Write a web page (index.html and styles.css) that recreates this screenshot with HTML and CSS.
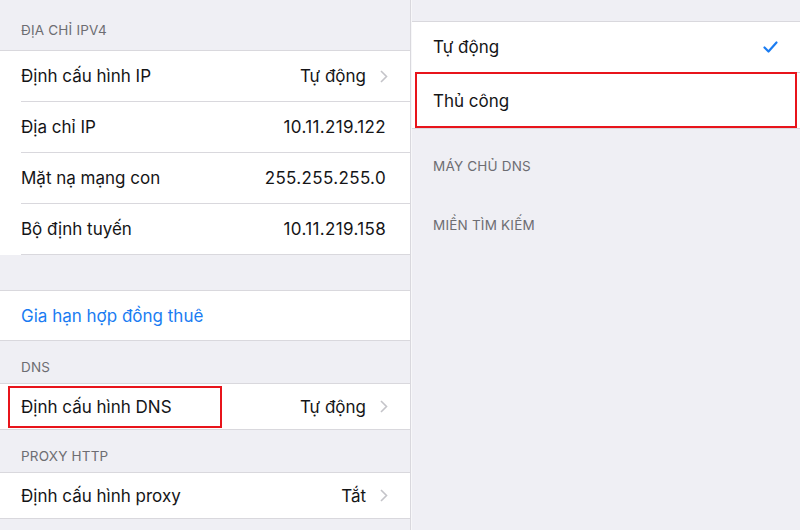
FILE: index.html
```html
<!DOCTYPE html>
<html lang="vi">
<head>
  <meta charset="UTF-8">
  <title>Wi-Fi – Cấu hình</title>
  <link rel="stylesheet" href="styles.css">
</head>
<body>
  <div class="split">
    <!-- network detail pane -->
    <div class="pane pane-left">
      <div class="section-title first">ĐỊA CHỈ IPV4</div>
      <div class="group">
        <div class="row">
          <span class="label">Định cấu hình IP</span>
          <span class="value">Tự động</span>
          <svg class="chevron" viewBox="0 0 8 13"><path d="M1 1l5.5 5.5L1 12"/></svg>
        </div>
        <div class="row">
          <span class="label">Địa chỉ IP</span>
          <span class="value num">10.11.219.122</span>
        </div>
        <div class="row">
          <span class="label">Mặt nạ mạng con</span>
          <span class="value num">255.255.255.0</span>
        </div>
        <div class="row last-inset">
          <span class="label">Bộ định tuyến</span>
          <span class="value num">10.11.219.158</span>
        </div>
      </div>

      <div class="group spaced">
        <div class="row slim">
          <span class="label link">Gia hạn hợp đồng thuê</span>
        </div>
      </div>

      <div class="section-title">DNS</div>
      <div class="group">
        <div class="row short">
          <span class="label marked">Định cấu hình DNS</span>
          <span class="value">Tự động</span>
          <svg class="chevron" viewBox="0 0 8 13"><path d="M1 1l5.5 5.5L1 12"/></svg>
        </div>
      </div>

      <div class="section-title">PROXY HTTP</div>
      <div class="group">
        <div class="row short">
          <span class="label">Định cấu hình proxy</span>
          <span class="value">Tắt</span>
          <svg class="chevron" viewBox="0 0 8 13"><path d="M1 1l5.5 5.5L1 12"/></svg>
        </div>
      </div>
    </div>

    <!-- DNS mode picker -->
    <div class="pane pane-right">
      <div class="group top">
        <div class="row">
          <span class="label">Tự động</span>
          <svg class="check" viewBox="0 0 15 12"><path d="M1.5 6.5l4 4L13.5 1.5"/></svg>
        </div>
        <div class="row tall marked-row">
          <span class="label">Thủ công</span>
        </div>
      </div>
      <div class="section-title plain">MÁY CHỦ DNS</div>
      <div class="section-title plain">MIỀN TÌM KIẾM</div>
    </div>
  </div>
</body>
</html>
```

FILE: styles.css
```css
:root {
  --bg: #efeff4;
  --cell: #ffffff;
  --line: #d9d8dd;
  --text: #151517;
  --muted: #6d6d72;
  --blue: #1a7cf2;
  --mark: #e8141b;
}

html, body {
  margin: 0;
  height: 100%;
}

body {
  background: var(--bg);
  font-family: Inter, "Noto Sans", sans-serif;
  color: var(--text);
  overflow: hidden;
}

.split {
  display: flex;
  height: 530px;
}

.pane {
  height: 100%;
}

.pane-left {
  width: 410px;
  border-right: 1px solid var(--line);
}

.pane-right {
  flex: 1;
  border-left: 1px solid #f7f7f9;
}

.section-title {
  font-size: 13.5px;
  line-height: 16px;
  color: var(--muted);
  padding: 18px 21px 8px;
  letter-spacing: 0.2px;
}

.section-title.first {
  padding-top: 22px;
  padding-bottom: 12px;
}

.section-title.plain {
  padding: 0 21px;
  margin-top: 43px;
}

.group.top + .section-title.plain {
  margin-top: 29px;
}

.group {
  background: var(--cell);
  border-top: 1px solid var(--line);
  border-bottom: 1px solid var(--line);
}

.group.spaced {
  margin-top: 35px;
}

.group.top {
  margin-top: 21px;
}

.row {
  display: flex;
  align-items: center;
  height: 50px;
  padding: 0 22px 0 21px;
  font-size: 17px;
  position: relative;
}

.row + .row {
  border-top: 1px solid var(--line);
  margin-left: 21px;
  padding-left: 0;
}

.row.slim {
  height: 49px;
}

.row.short {
  height: 45px;
}

.row.tall {
  height: 55px;
}

.group:has(.last-inset) {
  border-bottom: none;
}

.last-inset {
  border-bottom: 1px solid var(--line);
}

.label {
  flex: 1;
  white-space: nowrap;
}

.label.link {
  color: var(--blue);
}

.value {
  white-space: nowrap;
}

.value.num {
  letter-spacing: 0.35px;
  margin-right: 2px;
}

.chevron {
  width: 8px;
  height: 13px;
  margin-left: 14px;
  fill: none;
  stroke: #c4c4c9;
  stroke-width: 1.6;
}

.check {
  width: 15px;
  height: 12px;
  fill: none;
  stroke: var(--blue);
  stroke-width: 2.2;
  stroke-linecap: round;
  stroke-linejoin: round;
}

/* red annotation frames */
.marked {
  flex: 0 0 auto;
  margin-right: auto;
  position: relative;
}

.marked::after {
  content: "";
  position: absolute;
  left: -13px;
  right: -50px;
  top: -11px;
  bottom: -11px;
  border: 2px solid var(--mark);
}

.marked-row::after {
  content: "";
  position: absolute;
  left: -18px;
  right: 3px;
  top: -1px;
  bottom: 0;
  border: 2px solid var(--mark);
}
```
